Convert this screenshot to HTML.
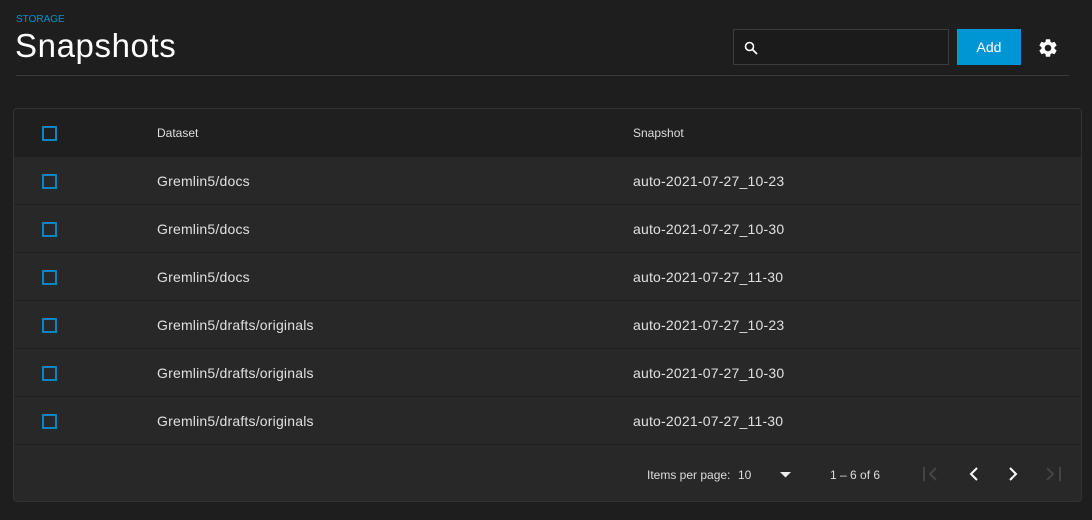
<!DOCTYPE html>
<html><head><style>
*{box-sizing:border-box;margin:0;padding:0}
body{width:1092px;height:520px;background:#1e1e1e;font-family:"Liberation Sans",sans-serif;color:#e0e0e0;position:relative;overflow:hidden}
.crumb{position:absolute;left:16px;top:14px;font-size:10px;color:#0095d5}
h1{position:absolute;left:15px;top:27px;font-size:33px;font-weight:normal;color:#fff;letter-spacing:0.6px}
.sep{position:absolute;left:16px;top:75px;width:1053px;height:1px;background:#3a3a3a}
.search{position:absolute;left:733px;top:29px;width:216px;height:36px;border:1px solid #3c3c3c;background:#1b1b1b}
.add{position:absolute;left:957px;top:29px;width:64px;height:36px;background:#0095d5;color:#fff;font-size:14px;text-align:center;line-height:36px}
.card{position:absolute;left:13px;top:108px;width:1069px;height:394px;background:#282828;border:1px solid #333;border-radius:4px;overflow:hidden}
.row{position:absolute;left:0;width:100%;height:48px;border-bottom:1px solid #1e1e1e;font-size:14px;color:#e0e0e0;letter-spacing:0.2px}
.row.h{background:#1f1f1f;font-size:12px;color:#ddd;letter-spacing:0}
.cb{position:absolute;left:28px;top:17px;width:15px;height:15px;border:2px solid #0a86c0}
.c1{position:absolute;left:143px;top:16px}
.c2{position:absolute;left:619px;top:16px}
.h .c1,.h .c2{top:17px}
.foot{position:absolute;left:0;top:337px;width:100%;height:56px;font-size:12px;color:#ddd}
</style></head><body>
<div class="crumb">STORAGE</div>
<h1>Snapshots</h1>
<div class="sep"></div>
<div class="search"><svg style="position:absolute;left:10px;top:11px" width="14" height="14" viewBox="0 0 14 14"><circle cx="5.5" cy="5.5" r="4" fill="none" stroke="#fff" stroke-width="1.6"/><path d="M8.5 8.5L13 13" stroke="#fff" stroke-width="1.8"/></svg></div>
<div class="add">Add</div>
<svg style="position:absolute;left:1037px;top:37px" width="22" height="22" viewBox="0 0 24 24"><path fill="#fff" d="M19.14 12.94c.04-.3.06-.61.06-.94 0-.32-.02-.64-.07-.94l2.030-1.58a.49.49 0 0 0 .12-.61l-1.92-3.32a.488.488 0 0 0-.59-.22l-2.39.96c-.5-.38-1.03-.7-1.62-.94l-.36-2.54a.484.484 0 0 0-.48-.41h-3.84c-.24 0-.43.17-.47.41l-.36 2.54c-.59.24-1.13.57-1.62.94l-2.39-.96c-.22-.08-.47 0-.59.22L2.74 8.87c-.12.21-.08.47.12.61l2.03 1.58c-.05.3-.09.63-.09.94s.02.64.07.94l-2.03 1.58a.49.49 0 0 0-.12.61l1.92 3.32c.12.22.37.29.59.22l2.39-.96c.5.38 1.030.7 1.62.94l.36 2.54c.05.24.24.41.48.41h3.84c.24 0 .44-.17.47-.41l.36-2.54c.59-.24 1.13-.56 1.62-.94l2.39.96c.22.08.47 0 .59-.22l1.92-3.32c.12-.22.07-.47-.12-.61l-2.01-1.58zM12 15.6c-1.98 0-3.6-1.62-3.6-3.6s1.62-3.6 3.6-3.6 3.6 1.62 3.6 3.6-1.62 3.6-3.6 3.6z"/></svg>
<div class="card">
<div class="row h" style="top:0"><div class="cb"></div><div class="c1">Dataset</div><div class="c2">Snapshot</div></div>
<div class="row" style="top:48px"><div class="cb"></div><div class="c1">Gremlin5/docs</div><div class="c2">auto-2021-07-27_10-23</div></div>
<div class="row" style="top:96px"><div class="cb"></div><div class="c1">Gremlin5/docs</div><div class="c2">auto-2021-07-27_10-30</div></div>
<div class="row" style="top:144px"><div class="cb"></div><div class="c1">Gremlin5/docs</div><div class="c2">auto-2021-07-27_11-30</div></div>
<div class="row" style="top:192px"><div class="cb"></div><div class="c1">Gremlin5/drafts/originals</div><div class="c2">auto-2021-07-27_10-23</div></div>
<div class="row" style="top:240px"><div class="cb"></div><div class="c1">Gremlin5/drafts/originals</div><div class="c2">auto-2021-07-27_10-30</div></div>
<div class="row" style="top:288px"><div class="cb"></div><div class="c1">Gremlin5/drafts/originals</div><div class="c2">auto-2021-07-27_11-30</div></div>
<div class="foot">
<span style="position:absolute;left:633px;top:22px">Items per page:</span>
<span style="position:absolute;left:724px;top:22px">10</span>
<svg style="position:absolute;left:766px;top:26px" width="12" height="6"><path d="M0 0h11L5.5 5.5z" fill="#eee"/></svg>
<span style="position:absolute;left:816px;top:22px">1 – 6 of 6</span>
<svg style="position:absolute;left:908px;top:20px" width="160" height="16" viewBox="0 0 160 16" fill="none" stroke-width="2">
<path d="M2 1v14M14 2L8 8l6 6" stroke="#444"/>
<path d="M55 2L49 8l6 6" stroke="#fff"/>
<path d="M88 2l6 6-6 6" stroke="#fff"/>
<path d="M125 2l6 6-6 6M138 1v14" stroke="#444"/>
</svg>
</div>
</div>
</body></html>
